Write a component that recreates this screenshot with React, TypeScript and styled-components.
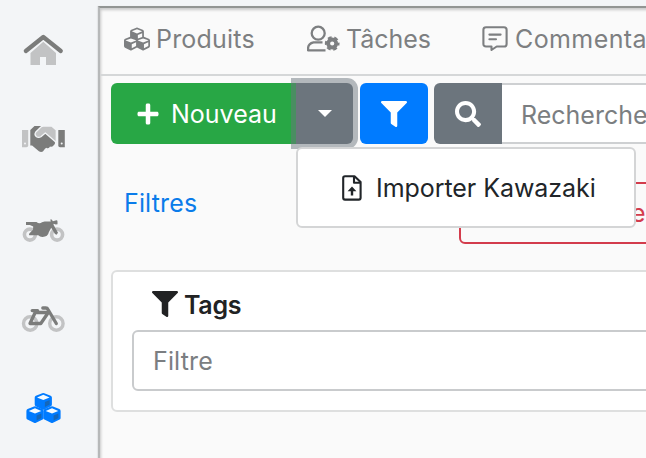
import React from "react";
import styled, { createGlobalStyle } from "styled-components";
import { FaCubes, FaFilter, FaPlus, FaSearch } from "react-icons/fa";

const GlobalStyle = createGlobalStyle`
  *, *::before, *::after { box-sizing: border-box; }
  body {
    margin: 0;
    overflow: hidden;
    background: #f3f5f7;
    font-family: Inter, "Liberation Sans", sans-serif;
    font-size: 25px;
    line-height: 38px;
    color: #212529;
  }
`;

const Shell = styled.div`
  display: flex;
  width: 646px;
  height: 458px;
  overflow: hidden;
  background: #f3f5f7;
`;

const Sidebar = styled.nav`
  flex: 0 0 98px;
  display: grid;
  grid-template-rows: 94px 90px 92px 88px 94px;
`;

const SideLink = styled.a`
  display: block;
  width: 98px;
  height: 90px;
  svg { display: block; }
`;

const Main = styled.main`
  flex: none;
  width: 600px;
  height: 500px;
  margin-top: 6px;
  background: #fafafa;
  border-left: 2px solid #b6b8b9;
  border-top: 2px solid #929593;
  box-shadow: inset 2px 3px 3px -1px rgba(0, 0, 0, 0.2), -1px 0 1px rgba(0, 0, 0, 0.06);
`;

const Tabs = styled.div`
  display: flex;
  height: 68px;
  padding: 0 0 4px 24px;
  align-items: center;
  color: #7d7f81;
  border-bottom: 2px solid #d5d7d8;
`;

const Tab = styled.a<{ $width: number; $gap: number }>`
  flex: none;
  display: flex;
  align-items: center;
  gap: ${(p) => p.$gap}px;
  width: ${(p) => p.$width}px;
  svg { flex: none; }
`;

const Label = styled.span<{ $tracking?: number }>`
  letter-spacing: ${(p) => p.$tracking ?? 0}px;
  white-space: nowrap;
`;

const Toolbar = styled.div`
  display: flex;
  height: 61px;
  margin: 7px 0 0 11px;
  color: #fff;
`;

const CreateButton = styled.button`
  flex: none;
  display: flex;
  align-items: center;
  gap: 11px;
  width: 185px;
  padding: 0 0 0 25px;
  border: 0;
  border-radius: 6px 0 0 6px;
  background: #28a745;
  color: inherit;
  font: inherit;
`;

const SplitGroup = styled.div`
  position: relative;
  flex: none;
  width: 57px;
  margin-right: 1px;
`;

const SplitToggle = styled.button`
  display: grid;
  place-items: center;
  width: 100%;
  height: 61px;
  padding: 0;
  border: 0;
  border-radius: 0 6px 6px 0;
  background: #6c757d;
  box-shadow: 0 0 0 5px rgba(108, 117, 125, 0.5);
  &::before {
    content: "";
    width: 0;
    border: 7px solid transparent;
    border-top-color: #fff;
    border-bottom: 0;
  }
`;

const Menu = styled.div`
  position: absolute;
  z-index: 2;
  top: 64px;
  left: 0;
  display: flex;
  align-items: center;
  gap: 14px;
  width: 340px;
  height: 81px;
  padding: 1px 0 0 44px;
  border: 2px solid #d4d5d6;
  border-radius: 6px;
  background: #fff;
  color: #212529;
`;

const IconButton = styled.button<{ $tone: string; $joined?: boolean }>`
  flex: none;
  display: grid;
  place-items: center;
  width: 68px;
  margin-left: 6px;
  padding: 0;
  border: 0;
  border-radius: ${(p) => (p.$joined ? "6px 0 0 6px" : "6px")};
  background: ${(p) => p.$tone};
  color: #fff;
`;

const SearchField = styled.div`
  flex: 1;
  display: flex;
  align-items: center;
  padding: 2px 0 0 19px;
  border: 2px solid #ced0d2;
  border-left: 0;
  background: #fff;
  color: #7b7e81;
`;

const FilterHead = styled.div`
  display: flex;
  height: 62px;
  margin: 38px 0 0 11px;
`;

const FilterLink = styled.a`
  flex: none;
  width: 348px;
  padding: 2px 0 0 13px;
  color: #0a7cea;
`;

const ResetButton = styled.button`
  flex: none;
  width: 300px;
  padding: 0 0 0 170px;
  text-align: left;
  border: 2px solid #d33c4c;
  border-radius: 6px;
  background: transparent;
  color: #d33c4c;
  font: inherit;
`;

const Card = styled.section`
  width: 620px;
  height: 142px;
  margin: 26px 0 0 11px;
  padding: 14px 0 0 19px;
  border: 2px solid #dedfdf;
  border-radius: 6px;
  background: #fff;
`;

const CardTitle = styled.h2`
  display: flex;
  align-items: center;
  gap: 6px;
  height: 38px;
  margin: 0;
  padding-left: 20px;
  font-size: 25px;
  font-weight: 600;
  color: #212223;
  svg { position: relative; top: -1px; }
`;

const FilterInput = styled.div`
  display: flex;
  align-items: center;
  height: 61px;
  margin-top: 6px;
  padding: 1px 0 0 19px;
  border: 2px solid #c9cbcd;
  border-radius: 6px;
  color: #7b7e81;
`;

const dark = "#7b7c7b";
const light = "#c2c3c4";

const Home = () => (
  <svg width="98" height="90" viewBox="0 0 98 90">
    <path d="M30.5 65V53l12.8-11.2L56 53v12H46v-8h-6v8z" fill={light} />
    <path d="M25.8 51 43.3 37 60.8 51" fill="none" stroke={dark} strokeWidth="4.2" strokeLinecap="round" strokeLinejoin="round" />
  </svg>
);

const Handshake = () => (
  <svg width="98" height="90" viewBox="0 94 98 90">
    <path d="M22 130h6.2v15.5q0 1.8-1.8 1.8H22z" fill={light} />
    <path d="M58.3 130h6.5v17.3H60q-1.7 0-1.7-1.8z" fill={dark} />
    <circle cx="25" cy="143.4" r="1" fill="#f3f5f7" />
    <circle cx="61.7" cy="143.4" r="1" fill="#f3f5f7" />
    <path d="M30.3 130.1 34.5 126H44l8 10 3 5.3q.5 2.8-1.5 4.3-1.4 1.7-3.5 1-1.2 2.5-3.7 1.1l-1.3 1-2.1 2.8q-2 1.1-4-.3l-6.8-5.8h-1.8z" fill={dark} />
    <path d="m35.8 132 5.4-5.2q1-.8 2.2-.8h8.2l4.7 4.1v12.3l-11-9.5-4.4 3.8q-2.3 1.3-4.4 0-2.5-2-.7-4.7z" fill={light} stroke="#f3f5f7" strokeWidth="1.3" strokeLinejoin="round" />
  </svg>
);

const Motorcycle = () => (
  <svg width="98" height="90" viewBox="0 184 98 90">
    <g fill="none" stroke={light} strokeWidth="3.6">
      <circle cx="29.9" cy="234.6" r="5.5" />
      <circle cx="57.1" cy="234.6" r="5.5" />
    </g>
    <path d="M26 222h10.5q2.8 2.3 5.5.3l2.6-.9h6.2l-.6-2 1.5.2 1.2 1.7 3.5-1q1.1 0 1.1 1.1v2.8l-1.8.4-2-.8-.2 1 4.5 8-1.4 2-1.6-.9-3.8-6.1-2.4 4.4q-.8 4.6-6.2 4.7-2.7.1-4.3-1.7h-9q-.8-1.1.2-2l3.5-3.5.2-3.3-3.3-1.4H26z" fill={dark} />
  </svg>
);

const Bicycle = () => (
  <svg width="98" height="90" viewBox="0 276 98 90">
    <g fill="none" stroke={light} strokeWidth="3.4">
      <circle cx="30.2" cy="323.5" r="6.7" />
      <circle cx="56.4" cy="323.5" r="6.7" />
    </g>
    <path d="M42.8 308h3q1.5 0 2.2 1.5l8.3 14M32.2 310.6h5.4M35.4 312l-5.4 11.5h10.8l7.5-11H35" fill="none" stroke={dark} strokeWidth="3.3" strokeLinecap="round" strokeLinejoin="round" />
  </svg>
);

const ProductCubes = () => (
  <svg width="98" height="90" viewBox="0 364 98 90">
    {[[43.3, 392.9], [35, 406.3], [52, 406.3]].map(([x, y]) => (
      <g key={x} transform={`translate(${x} ${y})`}>
        <path d="m-1 .3 1-.3 1 .3 6.4 2.5q1.2.5 1.2 1.9v7q0 1-1 1.6L1 16.5q-1 .5-2 0l-6.6-3.2q-1-.6-1-1.6v-7q0-1.4 1.2-1.9z" fill="#007bff" />
        <path d="m0 1.9 6.3 2.7L0 7.2l-6.3-2.6z" fill="#f5fbff" />
        <path d="m1.6 9.1 4.8-2v4.6l-4.8 2.4z" fill="#1667b8" />
      </g>
    ))}
  </svg>
);

const UserCog = () => (
  <svg width="33" height="28" viewBox="0 0 33 28">
    <g fill="none" stroke="currentColor" strokeWidth="2.3" strokeLinejoin="round">
      <circle cx="11.2" cy="8.2" r="6.5" />
      <path d="M15.5 17.3h-9Q1.2 18.5 1.1 23v2.3h17.4" />
    </g>
    <circle cx="25.2" cy="18.5" r="4" fill="none" stroke="currentColor" strokeWidth="3.8" />
    <circle cx="25.2" cy="18.5" r="5.9" fill="none" stroke="currentColor" strokeWidth="2.9" strokeDasharray="3.6 2.58" strokeDashoffset="-4.4" />
  </svg>
);

const CommentBox = () => (
  <svg width="26" height="26" viewBox="0 0 26 26">
    <g fill="none" stroke="currentColor" strokeWidth="2.1" strokeLinejoin="round" strokeLinecap="round">
      <path d="M4 1.2h18q2.6 0 2.6 2.6v14.1q0 2.6-2.6 2.6h-7.3L9.5 24v-3.5H4q-2.6 0-2.6-2.6V3.8Q1.4 1.2 4 1.2z" />
      <path d="M7.4 8.6h11.2M7.4 13.2H14" />
    </g>
  </svg>
);

const FileUpload = () => (
  <svg width="20" height="26" viewBox="0 0 20 26">
    <path d="M3 1.2h9.5L18.6 7v15.8q0 1.8-1.8 1.8H3q-1.8 0-1.8-1.8V3Q1.2 1.2 3 1.2zM12 1.5V7.7h6.3" fill="none" stroke="currentColor" strokeWidth="2.1" strokeLinejoin="round" />
    <path d="m10 11.5 4.4 4.8h-3.2v4.1H8.8v-4.1H5.6z" fill="currentColor" />
  </svg>
);

export default function App() {
  return (
    <>
      <GlobalStyle />
      <Shell>
        <Sidebar>
          <SideLink><Home /></SideLink>
          <SideLink><Handshake /></SideLink>
          <SideLink><Motorcycle /></SideLink>
          <SideLink><Bicycle /></SideLink>
          <SideLink><ProductCubes /></SideLink>
        </Sidebar>
        <Main>
          <Tabs>
            <Tab $width={183} $gap={6}><FaCubes size={26} /><Label $tracking={0.2}>Produits</Label></Tab>
            <Tab $width={175} $gap={6}><UserCog /><Label $tracking={-0.05}>Tâches</Label></Tab>
            <Tab $width={200} $gap={7}><CommentBox /><Label $tracking={0.4}>Commentaires</Label></Tab>
          </Tabs>
          <Toolbar>
            <CreateButton><FaPlus size={24} /><Label>Nouveau</Label></CreateButton>
            <SplitGroup>
              <SplitToggle aria-label="Plus d'actions" />
              <Menu><FileUpload /><Label $tracking={-0.05}>Importer Kawazaki</Label></Menu>
            </SplitGroup>
            <IconButton $tone="#007bff"><FaFilter size={26} /></IconButton>
            <IconButton $tone="#6c757d" $joined><FaSearch size={26} /></IconButton>
            <SearchField><Label>Rechercher</Label></SearchField>
          </Toolbar>
          <FilterHead>
            <FilterLink><Label $tracking={0.15}>Filtres</Label></FilterLink>
            <ResetButton>e</ResetButton>
          </FilterHead>
          <Card>
            <CardTitle><FaFilter size={26} /><Label $tracking={-0.3}>Tags</Label></CardTitle>
            <FilterInput><Label $tracking={0.15}>Filtre</Label></FilterInput>
          </Card>
        </Main>
      </Shell>
    </>
  );
}
